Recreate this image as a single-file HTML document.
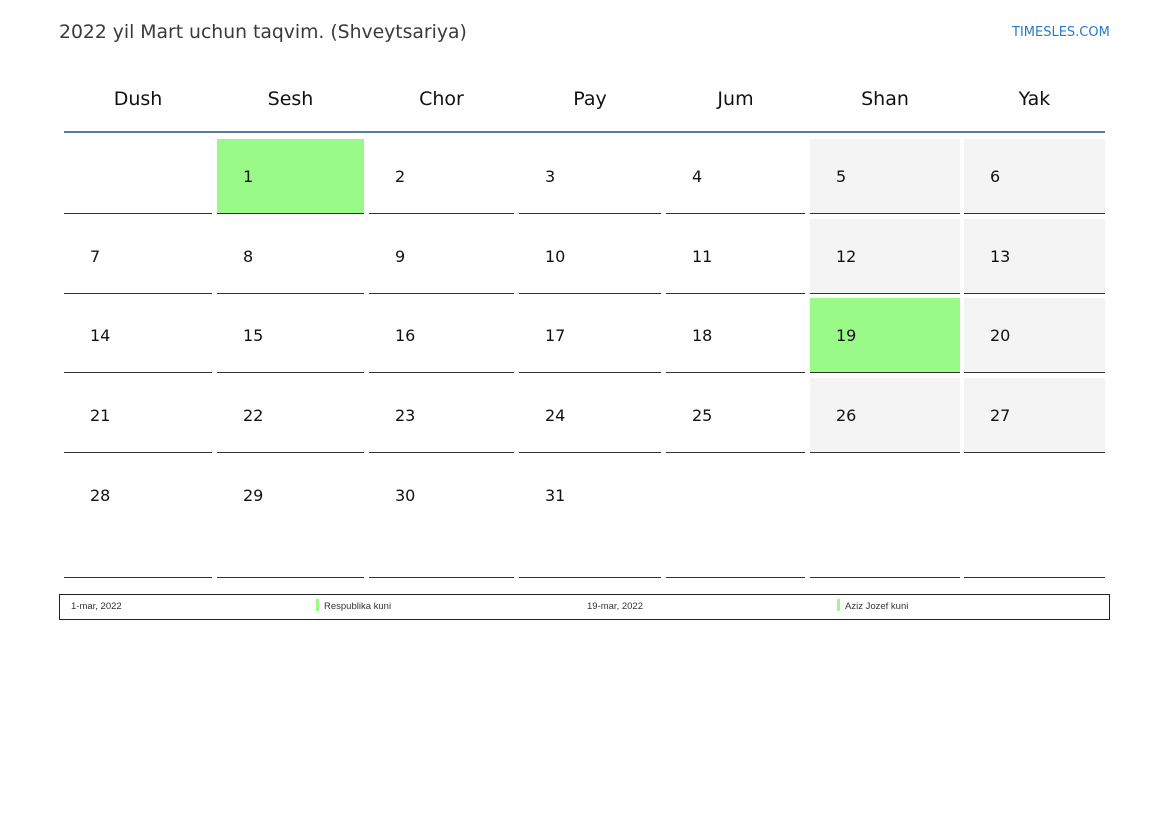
<!DOCTYPE html>
<html><head><meta charset="utf-8"><style>
body{margin:0;width:1169px;height:827px;background:#fff;position:relative;font-family:"DejaVu Sans","Liberation Sans",sans-serif;overflow:hidden}
.a{position:absolute}
.t{left:59px;top:22px;font-size:18.8px;color:#3a3a3a}
.l{left:1012px;top:25px;font-size:13px;color:#2a7ac8}
.h{top:88px;font-size:19px;color:#111;text-align:center}
.c{border-bottom:1px solid #333;box-sizing:border-box}
.n{font-size:16px;color:#111}
.f{font-size:9.5px;color:#333;font-family:"Liberation Sans Narrow","Liberation Sans",sans-serif;top:601px}
</style></head><body>
<div class="a t">2022 yil Mart uchun taqvim. (Shveytsariya)</div>
<div class="a l">TIMESLES.COM</div>
<div id="g"></div>
<div class="a" style="left:64px;top:131px;width:1041px;height:2px;background:#5b7aa0"></div>
<div class="a" style="left:59px;top:594px;width:1049px;height:24px;border:1px solid #222"></div>
<div class="a f" style="left:71px">1-mar, 2022</div>
<div class="a" style="left:316px;top:599px;width:3px;height:12px;background:#9afa87"></div>
<div class="a f" style="left:324px">Respublika kuni</div>
<div class="a f" style="left:587px">19-mar, 2022</div>
<div class="a" style="left:837px;top:599px;width:3px;height:12px;background:#9afa87"></div>
<div class="a f" style="left:845px">Aziz Jozef kuni</div>
<script>
var cols=[[64,212],[217,364],[369,514],[519,661],[666,805],[810,960],[964,1105]];
var names=["Dush","Sesh","Chor","Pay","Jum","Shan","Yak"];
var rows=[[139,214],[219,294],[298,373],[378,453],[458,578]];
var h="";
cols.forEach(function(c,i){h+='<div class="a h" style="left:'+c[0]+'px;width:'+(c[1]-c[0])+'px">'+names[i]+'</div>';});
for(var r=0;r<5;r++){for(var i=0;i<7;i++){
var d=r*7+i;var c=cols[i],ro=rows[r];var bg="#fff";
if(d>=1&&d<=31){if(i>=5)bg="#f4f4f4";if(d==1||d==19)bg="#9afa87";}
h+='<div class="a c" style="left:'+c[0]+'px;top:'+ro[0]+'px;width:'+(c[1]-c[0])+'px;height:'+(ro[1]-ro[0])+'px;background:'+bg+'"></div>';
if(d>=1&&d<=31){h+='<div class="a n" style="left:'+(c[0]+26)+'px;top:'+(ro[0]+28)+'px">'+d+'</div>';}
}}
document.getElementById("g").innerHTML=h;
</script>
</body></html>
